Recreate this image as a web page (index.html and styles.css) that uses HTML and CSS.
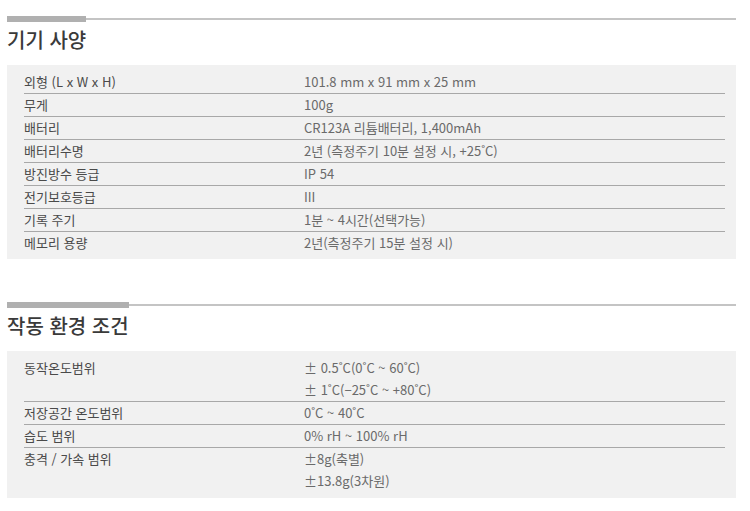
FILE: index.html
```html
<!DOCTYPE html>
<html lang="ko">
<head>
<meta charset="utf-8">
<link rel="stylesheet" href="styles.css">
</head>
<body>
<div class="page">
  <section class="spec">
    <div class="head"><h2 class="title">기기 사양</h2></div>
    <div class="panel">
      <table class="tbl">
        <tr><th>외형 (L x W x H)</th><td>101.8 mm x 91 mm x 25 mm</td></tr>
        <tr><th>무게</th><td>100g</td></tr>
        <tr><th>배터리</th><td>CR123A 리튬배터리, 1,400mAh</td></tr>
        <tr><th>배터리수명</th><td>2년 (측정주기 10분 설정 시, +25˚C)</td></tr>
        <tr><th>방진방수 등급</th><td>IP 54</td></tr>
        <tr><th>전기보호등급</th><td>III</td></tr>
        <tr><th>기록 주기</th><td>1분 ~ 4시간(선택가능)</td></tr>
        <tr><th>메모리 용량</th><td>2년(측정주기 15분 설정 시)</td></tr>
      </table>
    </div>
  </section>
  <section class="spec spec-2">
    <div class="head"><h2 class="title">작동 환경 조건</h2></div>
    <div class="panel">
      <table class="tbl">
        <tr><th>동작온도범위</th><td>± 0.5˚C(0˚C ~ 60˚C)<br>± 1˚C(−25˚C ~ +80˚C)</td></tr>
        <tr><th>저장공간 온도범위</th><td>0˚C ~ 40˚C</td></tr>
        <tr><th>습도 범위</th><td>0% rH ~ 100% rH</td></tr>
        <tr><th>충격 / 가속 범위</th><td>±8g(축별)<br>±13.8g(3차원)</td></tr>
      </table>
    </div>
  </section>
</div>
</body>
</html>
```
FILE: styles.css
```css
html, body {
  margin: 0;
  padding: 0;
  background: #fff;
}
body {
  font-family: "Noto Sans CJK KR", "Noto Sans", sans-serif;
  color: #444;
}
.page {
  padding: 18px 14px 0 7px;
}
.spec-2 {
  margin-top: 45px;
}
.head {
  border-top: 2px solid #c4c4c4;
}
.title {
  display: inline-block;
  margin: -4px 0 10px 0;
  border-top: 6px solid #b0b0b0;
  padding-top: 3px;
  font-size: 20px;
  line-height: 30px;
  font-weight: 500;
  color: #3a3a3a;
}
.panel {
  background: #f1f1f1;
  padding: 6px 11px 5px 17px;
}
.spec-2 .panel {
  padding-bottom: 6px;
}
.tbl {
  width: 100%;
  border-collapse: collapse;
  font-size: 13px;
  line-height: 22px;
}
.tbl th,
.tbl td {
  padding: 0;
  text-align: left;
  vertical-align: top;
  border-bottom: 1px solid #a8a8a8;
}
.tbl tr:last-child th,
.tbl tr:last-child td {
  border-bottom: none;
}
.tbl th {
  width: 280px;
  font-weight: 400;
  color: #4a4a4a;
}
.tbl td {
  font-weight: 400;
  color: #6a6a6a;
}
```
